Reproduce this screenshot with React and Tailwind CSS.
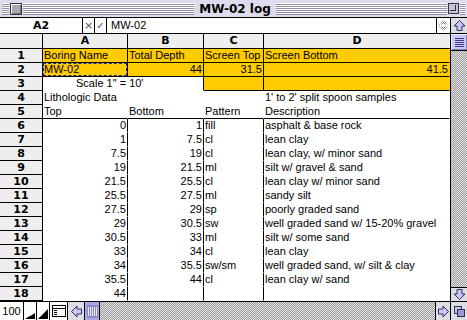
import React from 'react';

const rows = [
  ['Boring Name', 'Total Depth', 'Screen Top', 'Screen Bottom'],
  ['MW-02', 44, 31.5, 41.5],
  ['Scale 1" = 10\'', '', '', ''],
  ['Lithologic Data', '', '', "1' to 2' split spoon samples"],
  ['Top', 'Bottom', 'Pattern', 'Description'],
  [0, 1, 'fill', 'asphalt & base rock'],
  [1, 7.5, 'cl', 'lean clay'],
  [7.5, 19, 'cl', 'lean clay, w/ minor sand'],
  [19, 21.5, 'ml', 'silt w/ gravel & sand'],
  [21.5, 25.5, 'cl', 'lean clay w/ minor sand'],
  [25.5, 27.5, 'ml', 'sandy silt'],
  [27.5, 29, 'sp', 'poorly graded sand'],
  [29, 30.5, 'sw', 'well graded sand w/ 15-20% gravel'],
  [30.5, 33, 'ml', 'silt w/ some sand'],
  [33, 34, 'cl', 'lean clay'],
  [34, 35.5, 'sw/sm', 'well graded sand, w/ silt & clay'],
  [35.5, 44, 'cl', 'lean clay w/ sand'],
  [44, '', '', ''],
];

const widths = ['w-[85px]', 'w-[76px]', 'w-[60px]', 'flex-1'];

function cellSpec(r, c) {
  // returns {yellow, right, bottom}
  if (r === 0 || r === 1) return { yellow: true, right: c < 3, bottom: true };
  if (r === 2) {
    if (c === 0) return { yellow: false, right: false, bottom: false };
    if (c === 1) return { yellow: false, right: true, bottom: false };
    if (c === 2) return { yellow: true, right: true, bottom: true };
    return { yellow: true, right: false, bottom: true };
  }
  if (r === 3) return { yellow: false, right: false, bottom: false };
  if (r === 4) return { yellow: false, right: false, bottom: true };
  return { yellow: false, right: c < 3, bottom: false };
}

const cellFont = "font-['Liberation_Sans',Arial,sans-serif] text-[11px] leading-[13px]";
const boldFont = "font-['DejaVu_Sans',sans-serif] font-bold";

function Cell({ r, c, v }) {
  const s = cellSpec(r, c);
  const isNum = typeof v === 'number';
  const cls = [
    widths[c],
    'h-[14px] border-r border-b whitespace-nowrap relative',
    s.right ? 'border-r-black' : 'border-r-transparent',
    s.bottom ? 'border-b-black' : 'border-b-transparent',
    s.yellow ? 'bg-[#ffcc00]' : 'bg-white',
    isNum ? 'text-right pr-[1px]' : 'text-left pl-[1px]',
    r === 2 && c === 0 ? 'pl-[33px] overflow-visible z-10' : 'overflow-hidden',
    cellFont,
  ].join(' ');
  return (
    <div className={cls}>
      {r === 1 && c === 0 && (
        <div className="absolute left-[0px] top-[0px] right-[0px] bottom-[0px] border border-dashed border-[#1a2a99]" />
      )}
      <span className="relative">{v === '' ? '' : String(v)}</span>
    </div>
  );
}

const checker = 'bg-[repeating-conic-gradient(#9a9a9a_0_25%,#e4e4e4_0_50%)] bg-[length:2px_2px]';
const stripes = 'bg-[repeating-linear-gradient(to_bottom,#ffffff_0_1px,#9090a8_1px_2px)]';

function Arrow({ dir }) {
  const rot = { up: 0, right: 90, down: 180, left: 270 }[dir];
  return (
    <svg width="13" height="13" viewBox="0 0 13 13">
      <g transform={`rotate(${rot} 6.5 6.5)`}>
        <polygon
          points="6.5,1.5 12,7 9,7 9,11.5 4,11.5 4,7 1,7"
          fill="#c8c8f4"
          stroke="#30305a"
          strokeWidth="1"
          strokeLinejoin="miter"
        />
      </g>
    </svg>
  );
}

export default function App() {
  return (
    <div className="w-[467px] h-[320px] overflow-hidden bg-white flex flex-col select-none">
      {/* Title bar */}
      <div className="h-[18px] shrink-0 border-b border-black bg-[#dcdcec] flex items-center px-[2px]">
        <div className={`w-[7px] h-[12px] ${stripes}`} />
        <div className="mx-[1px] w-[12px] h-[12px] border border-[#333344] bg-[#a8a8b4] shadow-[inset_1px_1px_0_#ffffff,inset_-1px_-1px_0_#70707c]" />
        <div className={`flex-1 h-[12px] ${stripes}`} />
        <div className={`px-[5px] ${boldFont} text-[12px] leading-[14px] text-black`}>MW-02 log</div>
        <div className={`flex-1 h-[12px] ${stripes}`} />
        <div className="mx-[1px] w-[11px] h-[11px] border border-[#333344] bg-[#c4c4d4] relative">
          <div className="absolute left-[1px] top-[1px] w-[6px] h-[6px] border-r border-b border-[#333344]" />
        </div>
        <div className={`w-[5px] h-[12px] ${stripes}`} />
      </div>

      <div className="flex h-[283px] shrink-0">
        {/* Sheet */}
        <div className="w-[450px] flex flex-col">
          {/* Formula bar */}
          <div className="h-[16px] border-b border-black flex bg-white">
            <div className={`w-[83px] border-r border-black text-center ${boldFont} text-[11px] leading-[15px]`}>A2</div>
            <div className="w-[12px] border-r border-black flex items-center justify-center text-[#555] text-[11px] leading-[15px] font-['DejaVu_Sans',sans-serif]">×</div>
            <div className="w-[12px] border-r border-black flex items-center justify-center text-[#555] text-[10px] leading-[15px] font-['DejaVu_Sans',sans-serif]">✓</div>
            <div className={`flex-1 border-r border-black pl-[4px] ${cellFont} leading-[15px]`}>MW-02</div>
            <div className="w-[13px] flex items-center justify-center">
              <svg width="11" height="15" viewBox="0 0 11 15">
                <polyline points="1.5,6.5 5.5,2.5 9.5,6.5" fill="none" stroke="#555" strokeWidth="1" strokeDasharray="1 1" />
                <polyline points="3.5,6.5 5.5,4.5 7.5,6.5" fill="none" stroke="#777" strokeWidth="1" />
                <polyline points="1.5,8.5 5.5,12.5 9.5,8.5" fill="none" stroke="#555" strokeWidth="1" strokeDasharray="1 1" />
                <polyline points="3.5,8.5 5.5,10.5 7.5,8.5" fill="none" stroke="#777" strokeWidth="1" />
              </svg>
            </div>
          </div>
          {/* Column headers */}
          <div className={`h-[15px] border-b border-black flex bg-[#eeeeee] ${boldFont} text-[11px] leading-[14px]`}>
            <div className="w-[43px] border-r border-black" />
            <div className="w-[85px] border-r border-black text-center">A</div>
            <div className="w-[76px] border-r border-black text-center">B</div>
            <div className="w-[60px] border-r border-black text-center">C</div>
            <div className="flex-1 text-center">D</div>
          </div>
          {/* Rows */}
          {rows.map((row, r) => (
            <div key={r} className="flex h-[14px]">
              <div className={`w-[43px] h-[14px] bg-[#eeeeee] border-r border-b border-black text-center ${boldFont} text-[11px] leading-[13px]`}>
                {r + 1}
              </div>
              {row.map((v, c) => (
                <Cell key={c} r={r} c={c} v={v} />
              ))}
            </div>
          ))}
        </div>

        {/* Vertical scrollbar */}
        <div className="w-[17px] border-l border-black flex flex-col">
          <div className="h-[16px] border-b border-black bg-[#dddde4] flex items-center justify-center">
            <Arrow dir="up" />
          </div>
          <div className="h-[17px] border-b border-black bg-[#c8c8f4] shadow-[inset_1px_1px_0_#eeeeff,inset_-1px_-1px_0_#8080b0] flex flex-col items-center justify-center gap-[1px]">
            <div className="w-[9px] h-[1px] bg-[#404080]" />
            <div className="w-[9px] h-[1px] bg-[#404080]" />
            <div className="w-[9px] h-[1px] bg-[#404080]" />
            <div className="w-[9px] h-[1px] bg-[#404080]" />
            <div className="w-[9px] h-[1px] bg-[#404080]" />
          </div>
          <div className={`flex-1 ${checker}`} />
          <div className="h-[14px] border-t border-black bg-[#dddde4] flex items-center justify-center">
            <Arrow dir="down" />
          </div>
        </div>
      </div>

      {/* Bottom bar */}
      <div className="h-[19px] shrink-0 border-t border-black flex bg-white">
        <div className={`w-[24px] border-r border-black text-center ${cellFont} leading-[18px]`}>100</div>
        <div className="w-[13px] border-r border-black flex items-end justify-center">
          <svg width="12" height="17" viewBox="0 0 12 17">
            <polygon points="1,16 4,14 6,13 8,12 11,10 11,16" fill="#000" />
          </svg>
        </div>
        <div className="w-[13px] border-r border-black flex items-end justify-center">
          <svg width="12" height="17" viewBox="0 0 12 17">
            <polygon points="1,16 11,6 11,16" fill="#000" />
          </svg>
        </div>
        <div className="w-[18px] border-r border-black flex items-center justify-center">
          <svg width="14" height="12" viewBox="0 0 14 12">
            <rect x="0.5" y="0.5" width="13" height="11" fill="#fff" stroke="#000" />
            <line x1="0.5" y1="3.5" x2="13.5" y2="3.5" stroke="#000" />
            <rect x="2" y="5" width="3" height="1" fill="#000" />
            <rect x="2" y="7" width="3" height="1" fill="#000" />
            <rect x="2" y="9" width="3" height="1" fill="#000" />
          </svg>
        </div>
        <div className="w-[17px] border-r border-black bg-[#dddde4] flex items-center justify-center">
          <Arrow dir="left" />
        </div>
        <div className="w-[15px] border-r border-black bg-[#a8a8e4] flex items-center justify-center">
          <div className="w-[11px] h-[13px] bg-[#8888cc] flex items-stretch justify-center gap-[1px] py-[2px] px-[1px]">
            <div className="w-[1px] bg-[#e8e8ff]" />
            <div className="w-[1px] bg-[#e8e8ff]" />
            <div className="w-[1px] bg-[#e8e8ff]" />
            <div className="w-[1px] bg-[#e8e8ff]" />
            <div className="w-[1px] bg-[#e8e8ff]" />
          </div>
        </div>
        <div className={`flex-1 ${checker}`} />
        <div className="w-[15px] border-l border-black bg-[#dddde4] flex items-center justify-center">
          <Arrow dir="right" />
        </div>
        <div className="w-[17px] border-l border-black bg-[#dddde4] flex items-center justify-center">
          <svg width="13" height="13" viewBox="0 0 13 13">
            <rect x="1.5" y="1.5" width="7" height="7" fill="#c8c8f4" stroke="#30305a" />
            <rect x="4.5" y="4.5" width="7" height="7" fill="#9a9ad8" stroke="#30305a" />
          </svg>
        </div>
      </div>
    </div>
  );
}
